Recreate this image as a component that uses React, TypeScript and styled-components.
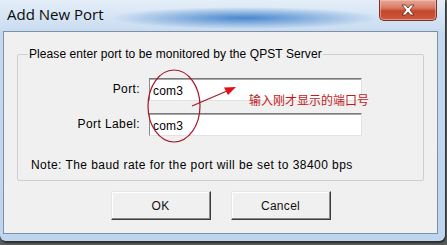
import React from "react";
import styled, { createGlobalStyle } from "styled-components";

const GlobalStyle = createGlobalStyle`
  html, body {
    margin: 0;
    padding: 0;
    width: 447px;
    height: 245px;
    overflow: hidden;
    background: #5e5e5e;
  }
  body {
    font-family: "Liberation Sans", Arial, sans-serif;
  }
`;

const Window = styled.div`
  position: relative;
  width: 445px;
  height: 241px;
  display: flex;
  flex-direction: column;
  background: linear-gradient(to bottom, #dce9f6 0px, #c4d9ef 30px, #bdd5ef 100%);
  border-radius: 0 0 6px 6px;
  box-shadow: 1px 2px 2px rgba(0, 0, 0, 0.55);
`;

const TitleBar = styled.div`
  height: 31px;
  flex: none;
  display: flex;
  align-items: flex-start;
  padding-left: 7px;
  background:
    radial-gradient(ellipse 135px 11px at 245px 18px, rgba(64, 130, 205, 0.95), rgba(64, 130, 205, 0) 100%),
    linear-gradient(to bottom, #e4eef8, #c9dcf0);
`;

const Title = styled.div`
  margin-top: 4px;
  font-family: "Open Sans", "Noto Sans", sans-serif;
  font-size: 15px;
  line-height: 20px;
  color: #0b0b0b;
`;

const CloseButton = styled.div`
  margin-left: auto;
  margin-right: 8px;
  width: 58px;
  height: 21px;
  box-sizing: border-box;
  display: flex;
  align-items: center;
  justify-content: center;
  border: 1px solid #7a3324;
  border-top: none;
  border-radius: 0 0 5px 5px;
  background: linear-gradient(to bottom, #e6a999 0%, #d87a63 40%, #c4472a 55%, #cc5b40 100%);
  box-shadow: inset 0 0 0 1px rgba(255, 200, 190, 0.5);
`;

const Client = styled.div`
  flex: 1;
  margin: 0 7px 7px 3px;
  border: 1px solid #7d90a8;
  background: #f0f0f0;
  padding: 15px 13px 0 13px;
  display: flex;
  flex-direction: column;
`;

const Group = styled.fieldset`
  margin: 0;
  border: 1px solid #cfcfcf;
  border-radius: 2px;
  padding: 16px 13px 7px 10px;
  font-size: 12px;
  color: #000;
`;

const Legend = styled.legend`
  padding: 0 1px;
  font-size: 12px;
  line-height: 15px;
  letter-spacing: 0.08px;
  color: #000;
`;

const Fields = styled.div`
  display: grid;
  grid-template-columns: 112px 213px;
  column-gap: 9px;
  row-gap: 12px;
  align-items: center;
`;

const Label = styled.label`
  text-align: right;
  font-size: 12px;
  line-height: 15px;
  letter-spacing: 0.4px;
  color: #000;
`;

const TextBox = styled.div`
  height: 23px;
  box-sizing: border-box;
  display: flex;
  align-items: center;
  padding: 2px 0 0 3px;
  background: #fff;
  border: 1px solid;
  border-color: #7a7a7a #e2e2e2 #e2e2e2 #8a8a8a;
  box-shadow: inset 0 1px 0 #a8a8a8;
  font-size: 12px;
  letter-spacing: 0.2px;
  color: #000;
`;

const Note = styled.div`
  margin-top: 22px;
  padding-left: 3px;
  font-size: 12px;
  line-height: 15px;
  letter-spacing: 0.44px;
  color: #000;
`;

const ButtonRow = styled.div`
  display: flex;
  justify-content: center;
  gap: 20px;
  margin-top: 10px;
`;

const Button = styled.div`
  width: 100px;
  height: 29px;
  box-sizing: border-box;
  display: flex;
  align-items: center;
  justify-content: center;
  background: #f0f0f0;
  border: 1px solid;
  border-color: #e6e6e6 #3c3c3c #3c3c3c #e6e6e6;
  box-shadow: inset -1px -1px 0 #8a8a8a, inset 1px 1px 0 #ffffff;
  font-size: 12px;
  letter-spacing: 0.3px;
  color: #111;
`;

const Annotation = styled.svg`
  position: absolute;
  left: 0;
  top: 0;
  width: 447px;
  height: 245px;
  pointer-events: none;
`;

const AnnotationText = styled.div`
  position: absolute;
  left: 249px;
  top: 93px;
  font-family: "Noto Sans CJK SC", sans-serif;
  font-size: 12px;
  line-height: 14px;
  color: #c21a1a;
  white-space: nowrap;
`;

export default function App() {
  return (
    <>
      <GlobalStyle />
      <Window>
        <TitleBar>
          <Title>Add New Port</Title>
          <CloseButton>
            <svg width="16" height="12" viewBox="0 0 16 12">
              <path
                d="M2 1 L5.5 1 L8 4 L10.5 1 L14 1 L10 6 L14 11 L10.5 11 L8 8 L5.5 11 L2 11 L6 6 Z"
                fill="#ffffff"
                stroke="#5a2418"
                strokeWidth="0.8"
                strokeLinejoin="round"
              />
            </svg>
          </CloseButton>
        </TitleBar>
        <Client>
          <Group>
            <Legend>Please enter port to be monitored by the QPST Server</Legend>
            <Fields>
              <Label>Port:</Label>
              <TextBox>com3</TextBox>
              <Label>Port Label:</Label>
              <TextBox>com3</TextBox>
            </Fields>
            <Note>Note: The baud rate for the port will be set to 38400 bps</Note>
          </Group>
          <ButtonRow>
            <Button>OK</Button>
            <Button>Cancel</Button>
          </ButtonRow>
        </Client>
        <Annotation viewBox="0 0 447 245">
          <ellipse cx="174" cy="106" rx="26" ry="36" fill="none" stroke="#a3182a" strokeWidth="1.2" />
          <line x1="192" y1="106" x2="227" y2="91" stroke="#a3182a" strokeWidth="1.2" />
          <polygon points="236,87 224,87.5 228,95" fill="#e0101a" />
        </Annotation>
        <AnnotationText>输入刚才显示的端口号</AnnotationText>
      </Window>
    </>
  );
}
